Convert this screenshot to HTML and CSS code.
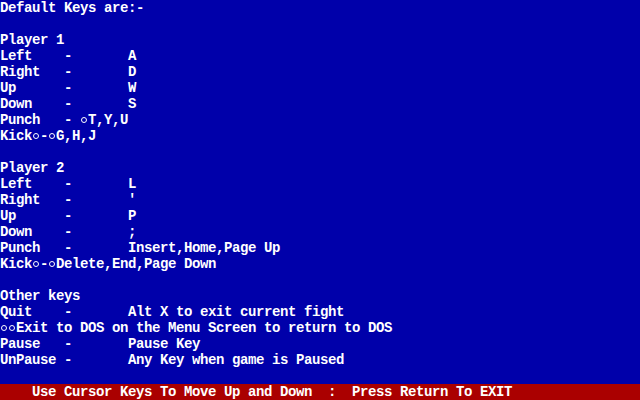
FILE: index.html
```html
<!DOCTYPE html>
<html>
<head>
<meta charset="utf-8">
<link rel="stylesheet" href="styles.css">
</head>
<body>
<div class="screen">
<pre class="text">Default Keys are:-

Player 1
Left    -       A
Right   -       D
Up      -       W
Down    -       S
Punch   - <span class="tab"></span>T,Y,U
Kick<span class="tab"></span>-<span class="tab"></span>G,H,J

Player 2
Left    -       L
Right   -       '
Up      -       P
Down    -       ;
Punch   -       Insert,Home,Page Up
Kick<span class="tab"></span>-<span class="tab"></span>Delete,End,Page Down

Other keys
Quit    -       Alt X to exit current fight
<span class="tab"></span><span class="tab"></span>Exit to DOS on the Menu Screen to return to DOS
Pause   -       Pause Key
UnPause -       Any Key when game is Paused</pre>
<pre class="status">    Use Cursor Keys To Move Up and Down  :  Press Return To EXIT</pre>
</div>
</body>
</html>
```
FILE: styles.css
```css
html, body {
  margin: 0;
  padding: 0;
  background: #0000aa;
}
.screen {
  width: 640px;
  height: 400px;
  display: flex;
  flex-direction: column;
  background: #0000aa;
  color: #ffffff;
  overflow: hidden;
}
.text, .status {
  margin: 0;
  font-family: "Liberation Mono", "DejaVu Sans Mono", monospace;
  font-weight: bold;
  font-size: 14px;
  letter-spacing: -0.4px;
  line-height: 16px;
  white-space: pre;
}
.text {
  flex: 1;
}
.status {
  height: 16px;
  background: #aa0000;
  color: #ffffff;
}
.tab {
  display: inline-block;
  width: 8px;
  height: 16px;
  vertical-align: top;
}
.tab::before {
  content: "";
  display: block;
  width: 4px;
  height: 4px;
  border: 1px solid #ffffff;
  border-radius: 50%;
  margin: 5px 0 0 1px;
}
```
